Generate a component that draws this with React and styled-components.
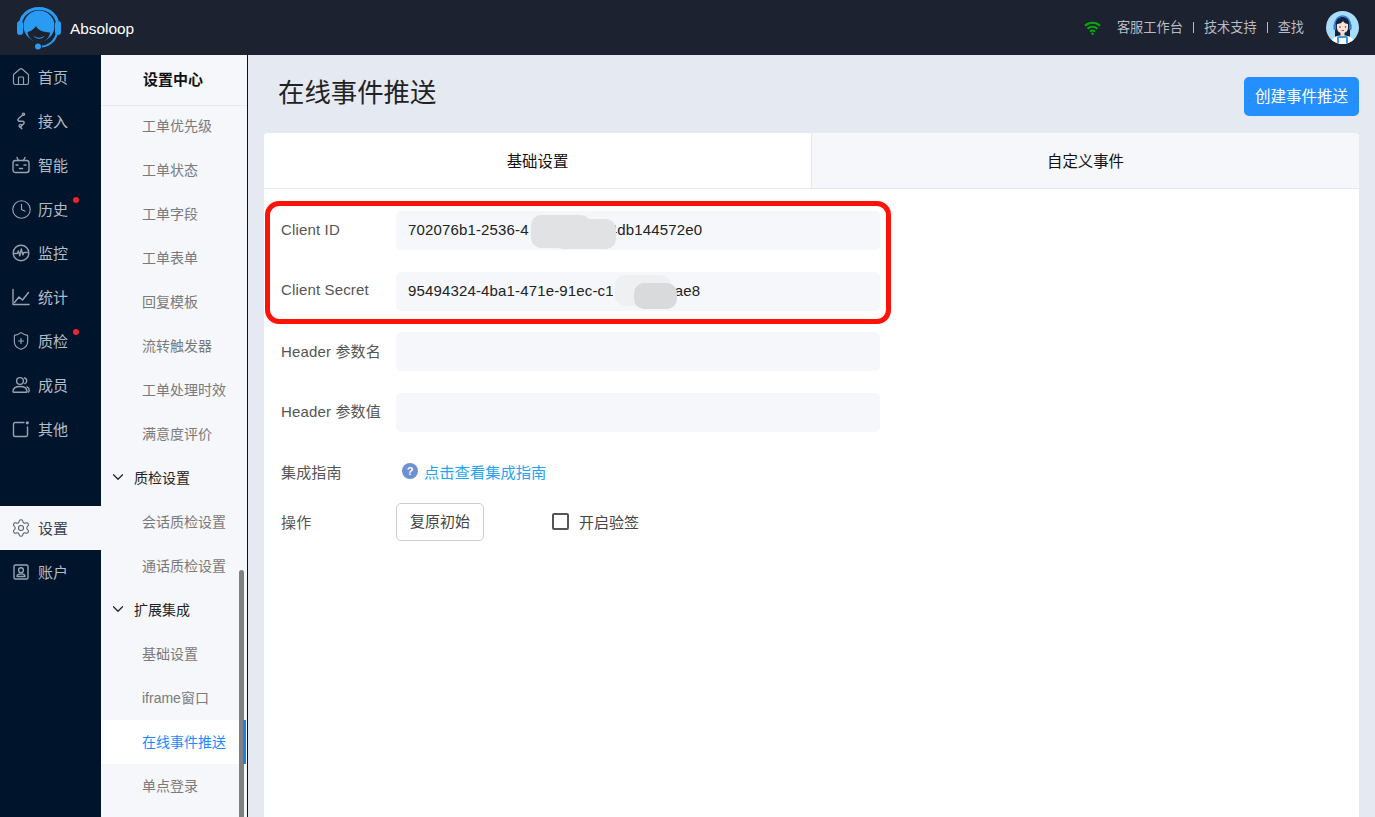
import React from 'react';
import styled, { createGlobalStyle } from 'styled-components';
import { Home, Clock, ShieldPlus, Settings, ChevronDown } from 'lucide-react';

const GlobalStyle = createGlobalStyle`
  html, body {
    margin: 0;
    height: 100%;
    overflow: hidden;
  }
  body {
    font-family: "Liberation Sans", "Noto Sans CJK SC", sans-serif;
    background: #e5e9f2;
  }
`;

const LineIcon = ({ children }) => (
  <svg width="18" height="18" viewBox="0 0 18 18" fill="none" stroke="currentColor" strokeWidth="1.4" strokeLinecap="round" strokeLinejoin="round">
    {children}
  </svg>
);

const AccessIcon = () => (
  <LineIcon>
    <circle cx="11.5" cy="2.2" r="1.1" />
    <path d="M10.6 3 6.4 6.800c-1 1-.3 2.400 1.100 2.400h3c1.500 0 2.100 1.500 1.100 2.500L8.400 15.300" />
    <path d="M8.400 15.300c-.8-.2-1.600-1-1.100-2 .4-.8 1.500-1 2.200-.4" />
    <path d="M8.400 15.300c.4.500.8 1 1.400 1.500" />
  </LineIcon>
);

const BotIcon = () => (
  <LineIcon>
    <rect x="1" y="4.500" width="16" height="12" rx="2.500" />
    <path d="M5 1.500 6.500 4.500M13 1.500l-1.500 3M4 9h2M12 9h2M7.500 12.500h3" />
  </LineIcon>
);

const MonitorIcon = () => (
  <LineIcon>
    <circle cx="9" cy="9" r="7.800" />
    <path d="M2.500 9.500h2.700l1.200-2.600 1.400 5 1.500-7 1.500 6 1-2.400h3.400" />
  </LineIcon>
);

const ChartIcon = () => (
  <LineIcon>
    <path d="M1 1.500v15h16" />
    <path d="M2.500 14.500 7 9l3.500 3 6-7.500" />
  </LineIcon>
);

const MembersIcon = () => (
  <LineIcon>
    <circle cx="8" cy="5" r="3.400" />
    <path d="M1 15.500c0-3.400 3-5 7-5s7 1.600 7 5c0 .6-.4.8-1 .8H2c-.6 0-1-.2-1-.8Z" />
    <path d="M12.500 2c1.600.5 2.300 1.700 2.200 3-.1 1.200-.8 2.100-1.900 2.600M15 10.800c1.300.6 2.200 1.800 2.200 3.400 0 .9-.3 1.400-.8 1.800" />
  </LineIcon>
);

const OtherIcon = () => (
  <LineIcon>
    <path d="M12 2.500H3a1.500 1.500 0 0 0-1.500 1.500v11A1.500 1.500 0 0 0 3 16.500h11a1.500 1.500 0 0 0 1.500-1.500V7" />
    <circle cx="15.300" cy="2.800" r="1.600" fill="currentColor" stroke="none" />
  </LineIcon>
);

const AccountIcon = () => (
  <LineIcon>
    <rect x="2" y="2" width="14" height="14" rx="1.500" />
    <circle cx="9" cy="7.200" r="2.400" />
    <path d="M5 13.500c0-1.800 1.800-2.600 4-2.600s4 .8 4 2.600Z" />
  </LineIcon>
);

const WifiIcon = () => (
  <svg width="17" height="14" viewBox="0 0 17 14" fill="none" stroke="#0aa70a" strokeWidth="2">
    <path d="M1 4.800a11 11 0 0 1 15 0" />
    <path d="M3.500 7.800a7.200 7.200 0 0 1 10 0" />
    <path d="M6 10.600a3.600 3.600 0 0 1 5 0" />
    <circle cx="8.500" cy="12.800" r="1.200" fill="#0aa70a" stroke="none" />
  </svg>
);

const Logo = () => (
  <svg width="46" height="46" viewBox="0 0 46 46">
    <path d="M4 21C4 10 12 2.500 23 2.500S42 10 42 21" fill="none" stroke="#2a9bf2" strokeWidth="3" />
    <rect x="1" y="15" width="6" height="14" rx="3" fill="#2a9bf2" />
    <rect x="39" y="15" width="6" height="14" rx="3" fill="#2a9bf2" />
    <circle cx="23" cy="20" r="15.500" fill="#2a9bf2" />
    <path d="M11.500 26c2-.3 6-2 8.500-6 1.500 3.500 6 6 14 6.500-.5 5.500-5 9.500-11 9.500S12 32 11.500 26Z" fill="#1c2230" />
    <path d="M17.500 29.500c3 3 8 3 11 0-1 4.200-9.500 4.500-11 0Z" fill="#2a9bf2" />
    <path d="M41 27c-1.500 7-7 12.800-15 13.500" fill="none" stroke="#2a9bf2" strokeWidth="2" />
    <circle cx="22" cy="40.500" r="3" fill="#2a9bf2" />
  </svg>
);

const Avatar = () => (
  <svg width="33" height="33" viewBox="0 0 33 33">
    <defs>
      <clipPath id="avatar-clip">
        <circle cx="16.500" cy="16.500" r="16.500" />
      </clipPath>
    </defs>
    <g clipPath="url(#avatar-clip)">
      <rect width="33" height="33" fill="#a9dbfa" />
      <path d="M9 14c0-5.500 3-8 7.500-8s7.500 2.500 7.500 8v12H9Z" fill="#14233f" />
      <path d="M5 33c.5-6 4-8.500 11.500-8.500S28 27 28.500 33Z" fill="#fff" />
      <path d="M11 33v-7l2.500-1.500h6L22 26v7Z" fill="#3f9be8" />
      <path d="M13 27h7v6h-7Z" fill="#fff" />
      <rect x="14.500" y="20" width="4" height="5" fill="#f8d8c4" />
      <path d="M11 13c2.500 0 5-1 6-3 1 2 3 3 5 3v4c0 3-2.500 5-5.500 5S11 20 11 17Z" fill="#fbe3d3" />
      <path d="M8.500 15C8.500 9 12 5 16.500 5s8 4 8 10" fill="none" stroke="#2f7fe0" strokeWidth="1.300" />
      <rect x="7.500" y="13" width="2.600" height="6" rx="1.200" fill="#2f7fe0" />
      <rect x="23" y="13" width="2.600" height="6" rx="1.200" fill="#2f7fe0" />
      <circle cx="14" cy="16" r=".7" fill="#14233f" />
      <circle cx="19.500" cy="16" r=".7" fill="#14233f" />
      <path d="M15.500 19.500h2.500" stroke="#c0392b" strokeWidth=".9" />
    </g>
  </svg>
);

const navItems = [
  { label: '首页', icon: <Home size={20} strokeWidth={1.4} /> },
  { label: '接入', icon: <AccessIcon /> },
  { label: '智能', icon: <BotIcon /> },
  { label: '历史', icon: <Clock size={21} strokeWidth={1.3} />, dot: true },
  { label: '监控', icon: <MonitorIcon /> },
  { label: '统计', icon: <ChartIcon /> },
  { label: '质检', icon: <ShieldPlus size={20} strokeWidth={1.4} />, dot: true },
  { label: '成员', icon: <MembersIcon /> },
  { label: '其他', icon: <OtherIcon /> },
];

const subMenu = [
  { label: '工单优先级' },
  { label: '工单状态' },
  { label: '工单字段' },
  { label: '工单表单' },
  { label: '回复模板' },
  { label: '流转触发器' },
  { label: '工单处理时效' },
  { label: '满意度评价' },
  { label: '质检设置', group: true },
  { label: '会话质检设置' },
  { label: '通话质检设置' },
  { label: '扩展集成', group: true },
  { label: '基础设置' },
  { label: 'iframe窗口' },
  { label: '在线事件推送', active: true },
  { label: '单点登录' },
];

function App() {
  return (
    <Page>
      <GlobalStyle />
      <TopBar>
        <Brand>
          <LogoWrap>
            <Logo />
          </LogoWrap>
          <BrandName>Absoloop</BrandName>
        </Brand>
        <TopLinks>
          <WifiMark>
            <WifiIcon />
          </WifiMark>
          <TopLink>客服工作台</TopLink>
          <TopSep />
          <TopLink>技术支持</TopLink>
          <TopSep />
          <TopLink>查找</TopLink>
          <AvatarWrap>
            <Avatar />
          </AvatarWrap>
        </TopLinks>
      </TopBar>
      <Body>
        <Rail>
          <RailGroup>
            {navItems.map(x => (
              <RailItem key={x.label}>
                <RailIcon>{x.icon}</RailIcon>
                {x.label}
                {x.dot && <RedDot />}
              </RailItem>
            ))}
          </RailGroup>
          <RailBottom>
            <RailItem $active>
              <RailIcon>
                <Settings size={20} strokeWidth={1.3} />
              </RailIcon>
              设置
            </RailItem>
            <RailItem>
              <RailIcon>
                <AccountIcon />
              </RailIcon>
              账户
            </RailItem>
          </RailBottom>
        </Rail>
        <SubPanel>
          <SubTitle>设置中心</SubTitle>
          {subMenu.map(x =>
            x.group ? (
              <SubGroup key={x.label}>
                <ChevronDown size={18} strokeWidth={1.6} />
                {x.label}
              </SubGroup>
            ) : (
              <SubItem key={x.label} $active={x.active}>
                {x.label}
              </SubItem>
            ),
          )}
          <ScrollThumb />
        </SubPanel>
        <Main>
          <TitleRow>
            <Title>在线事件推送</Title>
            <PrimaryButton>创建事件推送</PrimaryButton>
          </TitleRow>
          <Card>
            <Tabs>
              <Tab $active>基础设置</Tab>
              <Tab>自定义事件</Tab>
            </Tabs>
            <Form>
              <Highlight />
              <FormRow>
                <Label>Client ID</Label>
                <Field>
                  702076b1-2536-4
                  <MaskGap $width={80}>
                    <Patch $left={2} $width={60} $top={-5} $height={33} />
                    <Patch $left={24} $width={63} $top={-1} $height={30} />
                  </MaskGap>
                  4db144572e0
                </Field>
              </FormRow>
              <FormRow>
                <Label>Client Secret</Label>
                <Field>
                  95494324-4ba1-471e-91ec-c1
                  <MaskGap $width={61}>
                    <Patch $left={1} $width={56} $top={-6} $height={31} $light />
                    <Patch $left={20} $width={43} $top={2} $height={26} $dark />
                  </MaskGap>
                  ae8
                </Field>
              </FormRow>
              <FormRow>
                <Label>Header 参数名</Label>
                <Field />
              </FormRow>
              <FormRow>
                <Label>Header 参数值</Label>
                <Field />
              </FormRow>
              <GuideRow>
                <Label>集成指南</Label>
                <HelpDot>?</HelpDot>
                <GuideLink>点击查看集成指南</GuideLink>
              </GuideRow>
              <ActionRow>
                <Label>操作</Label>
                <OutlineButton>复原初始</OutlineButton>
                <CheckLabel>
                  <CheckBox />
                  开启验签
                </CheckLabel>
              </ActionRow>
            </Form>
          </Card>
        </Main>
      </Body>
    </Page>
  );
}

const Page = styled.div`
  display: flex;
  flex-direction: column;
  height: 817px;
  overflow: hidden;
`;

const TopBar = styled.header`
  display: flex;
  flex: none;
  align-items: center;
  justify-content: space-between;
  height: 55px;
  padding: 0 16px;
  background: #1c2230;
`;

const Brand = styled.div`
  display: flex;
  align-items: center;
  gap: 8px;
`;

const LogoWrap = styled.span`
  display: flex;
  margin-top: 3px;
`;

const BrandName = styled.span`
  padding-top: 2px;
  font-size: 15.4px;
  color: #fff;
`;

const TopLinks = styled.div`
  display: flex;
  align-items: center;
  font-size: 13.2px;
  color: #b9bcc2;
`;

const WifiMark = styled.span`
  display: flex;
  margin-right: 16px;
`;

const TopLink = styled.span`
  line-height: 20px;
`;

const TopSep = styled.i`
  width: 1px;
  height: 11px;
  margin: 0 10px;
  background: #b9bcc2;
`;

const AvatarWrap = styled.span`
  display: flex;
  margin-left: 22px;
`;

const Body = styled.div`
  display: flex;
  flex: 1;
  min-height: 0;
`;

const Rail = styled.nav`
  flex: none;
  width: 101px;
  background: #00152b;
`;

const RailGroup = styled.div`
  display: flex;
  flex-direction: column;
`;

const RailBottom = styled.div`
  display: flex;
  flex-direction: column;
  margin-top: 55px;
`;

const RailItem = styled.div`
  position: relative;
  display: flex;
  align-items: center;
  gap: 8px;
  height: 44px;
  padding: 0 0 2px 12px;
  box-sizing: border-box;
  font-size: 15px;
  color: ${props => (props.$active ? '#3c4350' : '#b4bcc7')};
  background: ${props => (props.$active ? '#f5f7fb' : 'transparent')};
`;

const RailIcon = styled.span`
  display: flex;
  flex: none;
  justify-content: center;
  width: 18px;
  margin-top: 2px;
  opacity: 0.85;

  svg {
    flex: none;
  }
`;

const RedDot = styled.i`
  position: absolute;
  top: 10px;
  left: 73px;
  width: 6px;
  height: 6px;
  border-radius: 50%;
  background: #f5222d;
`;

const SubPanel = styled.aside`
  position: relative;
  flex: none;
  width: 147px;
  padding-right: 8px;
  box-sizing: border-box;
  overflow: hidden;
  border-right: 1px solid #001529;
  background: #f5f7fb;
`;

const SubTitle = styled.div`
  height: 50px;
  margin: 0 -8px -2px 0;
  padding-left: 42px;
  font-size: 15px;
  font-weight: 700;
  line-height: 50px;
  color: #111;
  border-bottom: 1px solid #e7eaf1;
`;

const SubItem = styled.div`
  position: relative;
  height: 44px;
  padding-left: 41px;
  font-size: 14px;
  line-height: 44px;
  color: ${props => (props.$active ? '#1a8cff' : '#7a7a7a')};
  background: ${props => (props.$active ? '#fff' : 'transparent')};

  &::after {
    content: '';
    display: ${props => (props.$active ? 'block' : 'none')};
    position: absolute;
    top: 0;
    right: -7px;
    width: 3px;
    height: 44px;
    background: #1a7fe8;
    z-index: 2;
  }
`;

const SubGroup = styled.div`
  display: flex;
  align-items: center;
  gap: 7px;
  height: 44px;
  padding: 0 0 2px 8px;
  box-sizing: border-box;
  font-size: 14px;
  color: #222;
`;

const ScrollThumb = styled.i`
  position: absolute;
  top: 515px;
  right: 3px;
  bottom: 0;
  width: 5px;
  border-radius: 3px 3px 0 0;
  background: #808080;
`;

const Main = styled.main`
  display: flex;
  flex: 1;
  flex-direction: column;
  min-width: 0;
  padding: 0 16px;
  background: #e5e9f2;
`;

const TitleRow = styled.div`
  display: flex;
  flex: none;
  align-items: flex-start;
  justify-content: space-between;
  padding: 18px 0 17px 14px;
`;

const Title = styled.h1`
  margin: 0;
  font-size: 26.4px;
  font-weight: 400;
  line-height: 40px;
  color: #222;
`;

const PrimaryButton = styled.button`
  width: 115px;
  height: 39px;
  margin-top: 4px;
  padding: 0 0 4px;
  border: 0;
  border-radius: 5px;
  font-family: inherit;
  font-size: 15.5px;
  color: #fff;
  background: #2490ff;
`;

const Card = styled.section`
  flex: 1;
  border-radius: 4px 4px 0 0;
  background: #fff;
  overflow: hidden;
`;

const Tabs = styled.div`
  display: flex;
  height: 55px;
  border-bottom: 1px solid #e6e9f1;
`;

const Tab = styled.div`
  flex: 1;
  font-size: 15.4px;
  line-height: 58px;
  text-align: center;
  color: #111;
  background: ${props => (props.$active ? '#fff' : '#f5f7fb')};
  border-left: ${props => (props.$active ? '0' : '1px solid #e6e9f1')};
`;

const Form = styled.div`
  position: relative;
  display: flex;
  flex-direction: column;
  gap: 21.6px;
  padding: 22px 0 0 17px;
`;

const Highlight = styled.i`
  position: absolute;
  top: 12px;
  left: 1px;
  width: 616px;
  height: 113px;
  border: 5px solid #ff1208;
  border-radius: 14px;
  z-index: 3;
`;

const FormRow = styled.div`
  display: flex;
  align-items: center;
`;

const Label = styled.label`
  flex: none;
  width: 115px;
  padding-bottom: 3px;
  font-size: 15px;
  letter-spacing: 0.15px;
  color: #555;
`;

const Field = styled.div`
  display: flex;
  align-items: center;
  width: 484px;
  height: 39px;
  padding: 0 12px 2px;
  box-sizing: border-box;
  border-radius: 5px;
  font-size: 15px;
  letter-spacing: 0.15px;
  white-space: nowrap;
  color: #222;
  background: #f5f7fb;
`;

const MaskGap = styled.span`
  position: relative;
  flex: none;
  width: ${props => props.$width}px;
  height: 19px;
`;

const patchColor = props => {
  if (props.$light) return '#eff0f2';
  return props.$dark ? '#d9dadc' : '#e1e2e4';
};

const Patch = styled.i`
  position: absolute;
  top: ${props => props.$top}px;
  left: ${props => props.$left}px;
  width: ${props => props.$width}px;
  height: ${props => props.$height}px;
  border-radius: 10px;
  background: ${patchColor};
`;

const GuideRow = styled.div`
  display: flex;
  align-items: center;
  height: 20px;
  margin-top: 8px;

  ${Label} {
    padding-bottom: 0;
  }
`;

const HelpDot = styled.span`
  flex: none;
  width: 16px;
  height: 16px;
  margin: 0 0 0 6px;
  border-radius: 50%;
  font-size: 11px;
  font-weight: 700;
  line-height: 16px;
  text-align: center;
  color: #fff;
  background: #6d8fd3;
`;

const GuideLink = styled.a`
  margin-left: 6px;
  padding-bottom: 1px;
  font-size: 15.3px;
  color: #25a4f5;
`;

const ActionRow = styled.div`
  display: flex;
  align-items: center;

  ${Label} {
    padding-bottom: 1px;
  }
`;

const OutlineButton = styled.button`
  width: 88px;
  height: 38px;
  padding: 0 0 2px;
  border: 1px solid #c9ccd1;
  border-radius: 5px;
  font-family: inherit;
  font-size: 15px;
  color: #444;
  background: #fff;
`;

const CheckLabel = styled.span`
  display: flex;
  align-items: center;
  gap: 10px;
  margin-left: 68px;
  padding-bottom: 1px;
  font-size: 15px;
  color: #444;
`;

const CheckBox = styled.i`
  width: 13px;
  height: 13px;
  margin-top: 1px;
  border: 2px solid #555;
  border-radius: 2px;
`;

export default App;
